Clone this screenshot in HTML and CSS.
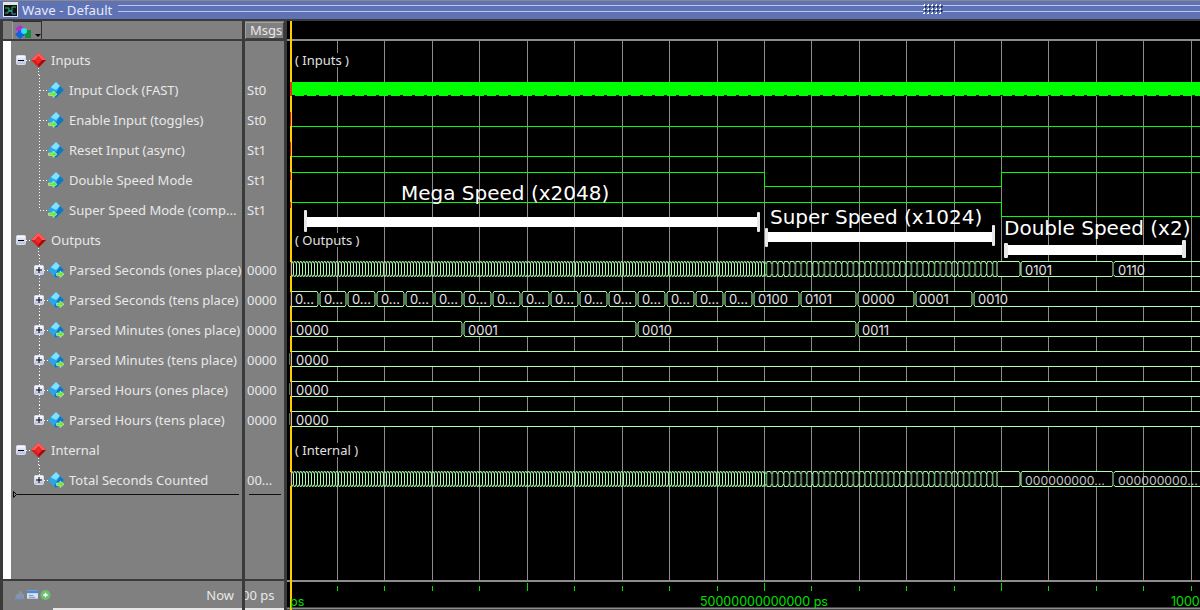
FILE: index.html
```html
<!DOCTYPE html>
<html lang="en">
<head>
    <meta charset="UTF-8">
    <title>Wave - Default</title>
    <link rel="stylesheet" href="styles.css">
</head>
<body>
    <svg class="icon-defs" aria-hidden="true">
        <defs>
            <linearGradient id="box-fill" x1="0" y1="0" x2="0" y2="1">
                <stop offset="0" stop-color="#ffffff"/>
                <stop offset="1" stop-color="#b4bcdc"/>
            </linearGradient>
            <g id="red-diamond">
                <polygon points="38.5,7.5 46,15 38.5,22.5 31,15" fill="#d81c1c"/>
                <polygon points="38.5,7.5 46,15 42,15 38.5,11 35,15 31,15" fill="#ff5a5a"/>
                <polygon points="46,15 38.5,22.5 38.5,19 42,15" fill="#a00c0c"/>
                <polygon points="38.5,11 42,15 38.5,19 35,15" fill="#ee2a2a"/>
            </g>
            <g id="blue-diamond">
                <polygon points="56,7 64,15 56,23 48,15" fill="#28a8e8"/>
                <polygon points="56,7 60,11 56,15 52,13 51,12" fill="#80e0ff"/>
                <polygon points="64,15 56,23 54,21 60,11" fill="#1078c0"/>
            </g>
            <path id="arrow-in" d="M48.5 18h4.500v-2l4 3.200-4 3.200v-2h-4.500z" fill="#60f020" stroke="#f0fff0" stroke-width=".5"/>
            <path id="arrow-out" d="M56.500 18h3.500v-2l4 3.200-4 3.200v-2h-3.500z" fill="#60f020" stroke="#f0fff0" stroke-width=".5"/>
            <g id="plus-box">
                <rect x="34.500" y="10.500" width="9" height="9" rx="1" fill="url(#box-fill)" stroke="#d8dcf0"/>
                <path d="M36 15h6M39 12v6" stroke="#000" fill="none"/>
            </g>

            <symbol id="tree-group" viewBox="11 0 58 30">
                <path class="dots" d="M26 15.500h5M38.500 23v7"/>
                <rect x="16.500" y="10.500" width="9" height="9" rx="1" fill="url(#box-fill)" stroke="#d8dcf0"/>
                <path d="M18 15.500h6" stroke="#000" fill="none"/>
                <use href="#red-diamond"/>
            </symbol>
            <symbol id="tree-in" viewBox="11 0 58 30">
                <path class="dots" d="M39.500 0v30M40 15.500h8"/>
                <use href="#blue-diamond"/>
                <use href="#arrow-in"/>
            </symbol>
            <symbol id="tree-in-last" viewBox="11 0 58 30">
                <path class="dots" d="M39.500 0v15M40 15.500h8"/>
                <use href="#blue-diamond"/>
                <use href="#arrow-in"/>
            </symbol>
            <symbol id="tree-bus" viewBox="11 0 58 30">
                <path class="dots" d="M39.500 0v10M39.500 20v10M44 15.500h4"/>
                <use href="#plus-box"/>
                <use href="#blue-diamond"/>
                <use href="#arrow-out"/>
            </symbol>
            <symbol id="tree-bus-last" viewBox="11 0 58 30">
                <path class="dots" d="M39.500 0v10M44 15.500h4"/>
                <use href="#plus-box"/>
                <use href="#blue-diamond"/>
                <use href="#arrow-out"/>
            </symbol>

            <!-- bus values that toggle too fast to label -->
            <pattern id="tile-fast" x="0" y="0" width="3" height="16" patternUnits="userSpaceOnUse">
                <path d="M0 2.500H.5V13.500H0M.5 2.500 1.200 .5H2.300L3 2.500M.5 13.500 1.200 15.500H2.300L3 13.500" fill="none" stroke="#aaffaa"/>
            </pattern>
            <pattern id="tile-mid" x="0" y="0" width="5.8" height="16" patternUnits="userSpaceOnUse">
                <path d="M0 2.500H.8V13.500H0M.8 2.500 1.800 .5H4.800L5.800 2.500M.8 13.500 1.800 15.500H4.800L5.800 13.500" fill="none" stroke="#aaffaa"/>
            </pattern>
            <g id="bus-dense">
                <rect x="0" y="0" width="475" height="16" fill="url(#tile-fast)"/>
                <rect x="475" y="0" width="232" height="16" fill="url(#tile-mid)"/>
                <path class="bus" d="M707 2l1-1.500h21l1 1.500v12l-1 1.500h-21l-1-1.500zM731 2l1-1.500h90l1 1.500v12l-1 1.500h-90l-1-1.500zM824 2l1-1.500h90M824 14l1 1.500h90"/>
            </g>
        </defs>
    </svg>

    <div class="window">
        <div class="titlebar">
            <svg class="title-icon" viewBox="0 0 15 15">
                <rect x=".5" y=".5" width="14" height="14" fill="#101010" stroke="#e4e4e4"/>
                <rect x="1" y="1" width="13" height="2" fill="#e4e4e4"/>
                <path d="M2 6h4v3h3V5h4" fill="none" stroke="#22c060"/>
                <path d="M2 11h3V9h4v3h4" fill="none" stroke="#30a0c0"/>
            </svg>
            <span class="title-text">Wave - Default</span>
            <div class="title-rule title-rule-long"></div>
            <div class="title-grip"></div>
            <div class="title-rule"></div>
        </div>

        <div class="panes">
            <div class="pane pane-names">
                <div class="pane-head">
                    <div class="head-button">
                        <svg class="head-icon" viewBox="0 0 18 16">
                            <polygon points="6,2 11,6 6,10 1,6" fill="#b030d0"/>
                            <rect x="11" y="7" width="6" height="8" fill="#109040"/>
                            <polygon points="6,7 11,11.500 6,16 1,11.500" fill="#1060e0"/>
                            <circle cx="10" cy="8" r="3" fill="#30e0f0"/>
                        </svg>
                        <span class="head-caret"></span>
                    </div>
                </div>
                <div class="pane-body names-body">
                    <div class="row"><svg class="row-tree"><use href="#tree-group"/></svg><span class="row-group">Inputs</span></div>
                    <div class="row"><svg class="row-tree"><use href="#tree-in"/></svg><span>Input Clock (FAST)</span></div>
                    <div class="row"><svg class="row-tree"><use href="#tree-in"/></svg><span>Enable Input (toggles)</span></div>
                    <div class="row"><svg class="row-tree"><use href="#tree-in"/></svg><span>Reset Input (async)</span></div>
                    <div class="row"><svg class="row-tree"><use href="#tree-in"/></svg><span>Double Speed Mode</span></div>
                    <div class="row"><svg class="row-tree"><use href="#tree-in-last"/></svg><span>Super Speed Mode (comp...</span></div>
                    <div class="row"><svg class="row-tree"><use href="#tree-group"/></svg><span class="row-group">Outputs</span></div>
                    <div class="row"><svg class="row-tree"><use href="#tree-bus"/></svg><span>Parsed Seconds (ones place)</span></div>
                    <div class="row"><svg class="row-tree"><use href="#tree-bus"/></svg><span>Parsed Seconds (tens place)</span></div>
                    <div class="row"><svg class="row-tree"><use href="#tree-bus"/></svg><span>Parsed Minutes (ones place)</span></div>
                    <div class="row"><svg class="row-tree"><use href="#tree-bus"/></svg><span>Parsed Minutes (tens place)</span></div>
                    <div class="row"><svg class="row-tree"><use href="#tree-bus"/></svg><span>Parsed Hours (ones place)</span></div>
                    <div class="row"><svg class="row-tree"><use href="#tree-bus-last"/></svg><span>Parsed Hours (tens place)</span></div>
                    <div class="row"><svg class="row-tree"><use href="#tree-group"/></svg><span class="row-group">Internal</span></div>
                    <div class="row"><svg class="row-tree"><use href="#tree-bus-last"/></svg><span>Total Seconds Counted</span></div>
                    <div class="row-end">
                        <svg class="row-end-mark" viewBox="0 0 4 7"><path d="M.5.500 3.500 3.500.5 6.500z" fill="none" stroke="#000"/></svg>
                        <div class="row-end-line"></div>
                    </div>
                </div>
                <div class="pane-foot">
                    <div class="foot-icons">
                        <svg class="foot-icon" viewBox="0 0 12 12">
                            <path d="M1 10l2-5h2l1-3h2l1 3h2v5z" fill="#8a94a8"/>
                            <path d="M0 10.500h12" stroke="#5a90e0"/>
                        </svg>
                        <svg class="foot-icon" viewBox="0 0 12 12">
                            <rect x="0" y="1" width="12" height="9" fill="#d8e4f8"/>
                            <rect x="0" y="1" width="12" height="3" fill="#4a88d8"/>
                            <path d="M2 6.500h5M2 8.500h7" stroke="#7090b8"/>
                        </svg>
                        <svg class="foot-icon" viewBox="0 0 12 12">
                            <circle cx="6" cy="6" r="5.500" fill="#6cc070"/>
                            <path d="M3.500 6h5M6 3.500v5" stroke="#fff" stroke-width="1.500"/>
                        </svg>
                    </div>
                    <span class="foot-now">Now</span>
                </div>
                <div class="foot-edge"></div>
            </div>

            <div class="pane pane-msgs">
                <div class="pane-head">
                    <div class="msgs-button">Msgs</div>
                </div>
                <div class="pane-body msgs-body">
                    <div class="row"></div>
                    <div class="row">St0</div>
                    <div class="row">St0</div>
                    <div class="row">St1</div>
                    <div class="row">St1</div>
                    <div class="row">St1</div>
                    <div class="row"></div>
                    <div class="row">0000</div>
                    <div class="row">0000</div>
                    <div class="row">0000</div>
                    <div class="row">0000</div>
                    <div class="row">0000</div>
                    <div class="row">0000</div>
                    <div class="row"></div>
                    <div class="row">00...</div>
                    <div class="row-end"><div class="row-end-line"></div></div>
                </div>
                <div class="pane-foot"><span class="foot-time">00 ps</span></div>
                <div class="foot-edge foot-edge-full"></div>
            </div>

            <div class="pane-wave">
                <svg class="wave" viewBox="287 21 913 589" width="913" height="589">
                    <!-- time grid -->
                    <path class="grid" d="M337.500 41V580M384.500 41V580M432.500 41V580M479.500 41V580M527.500 41V580M574.500 41V580M622.500 41V580M669.500 41V580M717.500 41V580M764.500 41V580M811.500 41V580M859.500 41V580M906.500 41V580M954.500 41V580M1001.500 41V580M1048.500 41V580M1096.500 41V580M1143.500 41V580M1191.500 41V580"/>
                    <path class="frame" d="M287 40H1200M287 581H1200M287 608.500H1200"/>

                    <!-- group rows -->
                    <rect class="label-back" x="295" y="53" width="54" height="14"/>
                    <text class="label" x="295" y="65">( Inputs )</text>
                    <rect class="label-back" x="295" y="233" width="64" height="14"/>
                    <text class="label" x="295" y="245">( Outputs )</text>
                    <rect class="label-back" x="295" y="443" width="62" height="14"/>
                    <text class="label" x="295" y="455">( Internal )</text>

                    <!-- single bit signals -->
                    <rect class="clock" x="292" y="82" width="908" height="14"/>
                    <path class="clock-gaps" d="M292 95.500H1200"/>
                    <path class="signal" d="M291 126.500H1200M291 156.500H1200M291 172.500H764.500V186.500H1001.500V172.500H1200M291 202.500H1001.500V216.500H1200"/>

                    <!-- buses -->
                    <use href="#bus-dense" x="290" y="261"/>
                    <use href="#bus-dense" x="290" y="471"/>
                    <path class="bus" d="M291 293.500l1-2h25l1 2v11l-1 2h-25l-1-2zM320 293.500l1-2h24l1 2v11l-1 2h-24l-1-2zM348 293.500l1-2h25l1 2v11l-1 2h-25l-1-2zM377 293.500l1-2h25l1 2v11l-1 2h-25l-1-2zM406 293.500l1-2h25l1 2v11l-1 2h-25l-1-2zM435 293.500l1-2h25l1 2v11l-1 2h-25l-1-2zM464 293.500l1-2h25l1 2v11l-1 2h-25l-1-2zM493 293.500l1-2h25l1 2v11l-1 2h-25l-1-2zM522 293.500l1-2h25l1 2v11l-1 2h-25l-1-2zM551 293.500l1-2h25l1 2v11l-1 2h-25l-1-2zM580 293.500l1-2h25l1 2v11l-1 2h-25l-1-2zM609 293.500l1-2h25l1 2v11l-1 2h-25l-1-2zM638 293.500l1-2h25l1 2v11l-1 2h-25l-1-2zM667 293.500l1-2h25l1 2v11l-1 2h-25l-1-2zM696 293.500l1-2h25l1 2v11l-1 2h-25l-1-2zM725 293.500l1-2h25l1 2v11l-1 2h-25l-1-2zM754 293.500l1-2h43l1 2v11l-1 2h-43l-1-2zM801 293.500l1-2h53l1 2v11l-1 2h-53l-1-2zM858 293.500l1-2h54l1 2v11l-1 2h-54l-1-2zM916 293.500l1-2h54l1 2v11l-1 2h-54l-1-2zM974 293.500l1-2h240v15h-240l-1-2z"/>
                    <path class="bus" d="M291 323.500l1-2h169l1 2v11l-1 2h-169l-1-2zM464 323.500l1-2h170l1 2v11l-1 2h-170l-1-2zM638 323.500l1-2h216l1 2v11l-1 2h-216l-1-2zM858 323.500l1-2h350v15h-350l-1-2z"/>
                    <path class="bus" d="M290 353.500l1-2h920v15h-920l-1-2zM290 383.500l1-2h920v15h-920l-1-2zM290 413.500l1-2h920v15h-920l-1-2z"/>

                    <text class="bus-text" x="295" y="304">0...</text>
                    <text class="bus-text" x="324" y="304">0...</text>
                    <text class="bus-text" x="352" y="304">0...</text>
                    <text class="bus-text" x="381" y="304">0...</text>
                    <text class="bus-text" x="410" y="304">0...</text>
                    <text class="bus-text" x="439" y="304">0...</text>
                    <text class="bus-text" x="468" y="304">0...</text>
                    <text class="bus-text" x="497" y="304">0...</text>
                    <text class="bus-text" x="526" y="304">0...</text>
                    <text class="bus-text" x="555" y="304">0...</text>
                    <text class="bus-text" x="584" y="304">0...</text>
                    <text class="bus-text" x="613" y="304">0...</text>
                    <text class="bus-text" x="642" y="304">0...</text>
                    <text class="bus-text" x="671" y="304">0...</text>
                    <text class="bus-text" x="700" y="304">0...</text>
                    <text class="bus-text" x="729" y="304">0...</text>
                    <text class="bus-text" x="758" y="304">0100</text>
                    <text class="bus-text" x="805" y="304">0101</text>
                    <text class="bus-text" x="862" y="304">0000</text>
                    <text class="bus-text" x="919" y="304">0001</text>
                    <text class="bus-text" x="978" y="304">0010</text>
                    <text class="bus-text" x="296" y="335">0000</text>
                    <text class="bus-text" x="468" y="335">0001</text>
                    <text class="bus-text" x="642" y="335">0010</text>
                    <text class="bus-text" x="862" y="335">0011</text>
                    <text class="bus-text" x="296" y="365">0000</text>
                    <text class="bus-text" x="296" y="395">0000</text>
                    <text class="bus-text" x="296" y="425">0000</text>
                    <text class="bus-text" x="1025" y="275">0101</text>
                    <text class="bus-text" x="1118" y="275">0110</text>
                    <text class="bus-text bus-text-dim" x="1025" y="485">000000000...</text>
                    <text class="bus-text bus-text-dim" x="1118" y="485">000000000...</text>

                    <!-- cursor and the marks where each signal starts -->
                    <rect class="cursor" x="290" y="21" width="2" height="589"/>
                    <rect class="start-red" x="290" y="82" width="2" height="14"/>
                    <path class="start-red-line" d="M290.500 112V126M290.500 142V156M290.500 172V180M290.500 202V208"/>
                    <path class="start-blue" d="M290.500 262V276M290.500 292V306M290.500 322V336M290.500 352V366M290.500 382V396M290.500 412V426M290.500 472V486"/>

                    <!-- speed annotations -->
                    <text class="note" x="401" y="200">Mega Speed (x2048)</text>
                    <rect class="note-bar" x="305" y="217" width="454" height="10"/>
                    <rect class="note-cap" x="304" y="210" width="3" height="22" rx="1"/>
                    <rect class="note-cap" x="757" y="212" width="3" height="20" rx="1"/>
                    <text class="note" x="770" y="224">Super Speed (x1024)</text>
                    <rect class="note-bar" x="766" y="232" width="228" height="10"/>
                    <rect class="note-cap" x="765" y="228" width="3" height="19" rx="1"/>
                    <rect class="note-cap" x="992" y="225" width="3" height="21" rx="1"/>
                    <text class="note" x="1004" y="235">Double Speed (x2)</text>
                    <rect class="note-bar" x="1006" y="245" width="178" height="10"/>
                    <rect class="note-cap" x="1004" y="243" width="4" height="15" rx="1"/>
                    <rect class="note-cap" x="1182" y="240" width="4" height="18" rx="1"/>

                    <!-- time ruler -->
                    <path class="tick" d="M337.500 586V591M384.500 586V591M432.500 586V591M479.500 586V591M527.500 583V591M574.500 586V591M622.500 586V591M669.500 586V591M717.500 586V591M764.500 583V591M811.500 586V591M859.500 586V591M906.500 586V591M954.500 586V591M1001.500 583V591M1048.500 586V591M1096.500 586V591M1143.500 586V591M1191.500 586V591"/>
                    <text class="ruler" x="290" y="606">ps</text>
                    <text class="ruler" x="700" y="606">50000000000000 ps</text>
                    <text class="ruler" x="1171" y="606">1000</text>
                </svg>
            </div>
        </div>
    </div>
</body>
</html>
```
FILE: styles.css
```css
* {
    box-sizing: border-box;
}
html, body {
    margin: 0;
    padding: 0;
    overflow: hidden;
}
body {
    width: 1200px;
    height: 610px;
    background: #3a3a3a;
    font-family: "Noto Sans", sans-serif;
    font-size: 13px;
    color: #e8e8e8;
}
.icon-defs {
    position: absolute;
    width: 0;
    height: 0;
}
.dots {
    fill: none;
    stroke: #ffffff;
    stroke-dasharray: 1 2;
}
.window {
    display: flex;
    flex-direction: column;
    height: 610px;
}

/* title bar */
.titlebar {
    display: flex;
    align-items: center;
    height: 21px;
    padding: 1px 0 2px 3px;
    background: #5f72b4;
    border-top: 1px solid #8a8a8a;
    border-bottom: 2px solid #3a3a3a;
}
.title-icon {
    width: 15px;
    height: 15px;
    flex: none;
}
.title-text {
    width: 96px;
    margin-left: 4px;
    font-size: 13.25px;
    color: #e4e8fa;
    white-space: nowrap;
}
.title-rule {
    flex: 257;
    height: 7px;
    border-top: 1px solid #b8c4f4;
    border-bottom: 1px solid #b8c4f4;
    margin-top: -2px;
}
.title-rule-long {
    flex: 804;
}
.title-grip {
    width: 20px;
    height: 10px;
    margin-top: -2px;
    background:
        radial-gradient(circle at 1.5px 1.5px, #ffffff 1px, transparent 1px) 0 0 / 4px 4px,
        radial-gradient(circle at 2.5px 2.5px, #202a58 1px, transparent 1px) 0 0 / 4px 4px;
}

/* panes */
.panes {
    display: flex;
    flex: 1;
    min-height: 0;
}
.pane {
    display: flex;
    flex-direction: column;
    background: #808080;
}
.pane-names {
    width: 242px;
    margin-right: 3px;
    border-left: 3px solid #3a3a3a;
}
.pane-msgs {
    width: 39px;
    margin-right: 3px;
    overflow: hidden;
}
.pane-head {
    height: 20px;
    flex: none;
    border-bottom: 2px solid #3a3a3a;
}
.head-button {
    display: flex;
    align-items: flex-end;
    width: 30px;
    height: 18px;
    margin-left: 9px;
    padding: 0 1px 0 1px;
    border-top: 1px solid #303030;
    border-left: 1px solid #a0a0a0;
    border-right: 1px solid #303030;
}
.head-icon {
    width: 18px;
    height: 16px;
    flex: none;
}
.head-caret {
    margin: 0 0 2px 3px;
    border-top: 3px solid #000;
    border-left: 3px solid transparent;
    border-right: 3px solid transparent;
}
.msgs-button {
    height: 17px;
    margin-top: 1px;
    padding-left: 4px;
    line-height: 15px;
    color: #e8e8e8;
    border: 1px solid #404040;
    border-left-color: #a0a0a0;
    border-top-color: #a0a0a0;
}
.pane-body {
    flex: 1;
    padding-top: 4px;
    min-height: 0;
}
.names-body {
    background: linear-gradient(to right, #ffffff 8px, #808080 8px);
    padding-left: 8px;
}
.msgs-body {
    padding-left: 2px;
}
.row {
    display: flex;
    align-items: center;
    height: 30px;
    white-space: nowrap;
}
.row-tree {
    width: 58px;
    height: 30px;
    flex: none;
}
.row-group {
    margin-left: -18px;
}
.row-end {
    display: flex;
    align-items: center;
    height: 7px;
    margin-top: -4px;
    padding: 0 3px 0 2px;
}
.row-end-mark {
    width: 4px;
    height: 7px;
    flex: none;
}
.row-end-line {
    flex: 1;
    height: 1px;
    background: #101010;
}
.pane-foot {
    display: flex;
    align-items: center;
    flex: none;
    height: 29px;
    border-top: 2px solid #3a3a3a;
}
.foot-icons {
    display: flex;
    gap: 2px;
    padding-left: 11px;
}
.foot-icon {
    width: 11px;
    height: 12px;
}
.foot-now {
    margin-left: auto;
    margin-right: 8px;
}
.foot-time {
    margin-left: -3px;
    white-space: nowrap;
}
.foot-edge {
    flex: none;
    height: 2px;
    margin-left: 50px;
    background: #e8e8e8;
}
.foot-edge-full {
    margin-left: 0;
}

/* wave canvas */
.pane-wave {
    flex: 1;
    background: #000;
}
.wave {
    display: block;
    font-family: "Noto Sans", sans-serif;
}
.grid {
    fill: none;
    stroke: #8c8c8c;
}
.frame {
    fill: none;
    stroke: #8c8c8c;
    stroke-width: 2;
}
.label-back {
    fill: #000;
}
.label {
    font-size: 13px;
    fill: #e0e0e0;
}
.clock {
    fill: #00ff00;
}
.clock-gaps {
    fill: none;
    stroke: #000;
    stroke-dasharray: 3 9;
}
.signal {
    fill: none;
    stroke: #00ff00;
}
.bus {
    fill: #000;
    stroke: #aaffaa;
}
.bus-text {
    font-family: Inter, sans-serif;
    font-size: 13px;
    fill: #e4e4e4;
}
.bus-text-dim {
    font-size: 12.25px;
    fill: #c4c4c4;
}
.cursor {
    fill: #ffcc00;
}
.start-red {
    fill: #f03010;
}
.start-red-line {
    stroke: #e02020;
    fill: none;
}
.start-blue {
    stroke: #2828c0;
    fill: none;
}
.note {
    font-family: "DejaVu Sans", sans-serif;
    font-size: 20px;
    fill: #ffffff;
}
.note-bar {
    fill: #ffffff;
}
.note-cap {
    fill: #e8e8e8;
}
.tick {
    fill: none;
    stroke: #00e000;
}
.ruler {
    font-family: Inter, sans-serif;
    font-size: 12.5px;
    fill: #00e000;
}
```
